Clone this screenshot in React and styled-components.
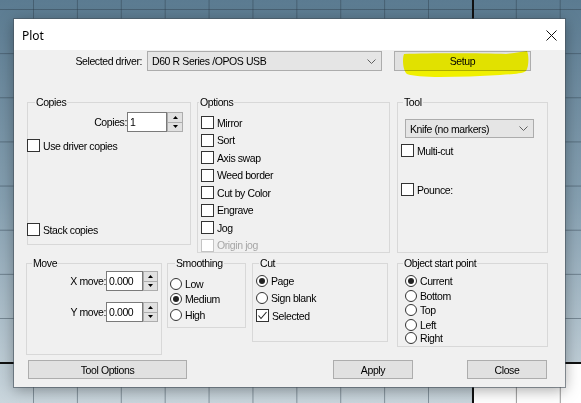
import React from 'react'
import styled, { createGlobalStyle } from 'styled-components'

const GlobalStyle = createGlobalStyle`
  html, body {
    margin: 0;
    padding: 0;
  }
  body {
    font-family: "Liberation Sans", Arial, sans-serif;
    font-size: 10.5px;
    letter-spacing: -0.4px;
    color: #000;
  }
`

const Desktop = styled.div`
  position: relative;
  width: 581px;
  height: 403px;
  overflow: hidden;
  background: linear-gradient(180deg, #5b7b91 0%, #86a0b1 50%, #cad6dd 100%);
`
const Grid = styled.div`
  position: absolute;
  inset: 0;
  background-image:
    linear-gradient(90deg, rgba(45, 62, 75, 0.45) 1px, transparent 1px),
    linear-gradient(180deg, rgba(45, 62, 75, 0.45) 1px, transparent 1px);
  background-size: 43.9px 44.15px;
  background-position: 33px 9px;
`
const Paper = styled.div`
  position: absolute;
  left: 472px;
  top: 362px;
  right: 0;
  bottom: 0;
  background-color: #fff;
  background-image: linear-gradient(90deg, #9a9a9a 1px, transparent 1px);
  background-size: 43.9px 100%;
`
const HLine = styled.div`
  position: absolute;
  left: 0;
  right: 0;
  top: 362px;
  height: 2px;
  background: #111;
`
const VLine = styled.div`
  position: absolute;
  top: 0;
  bottom: 0;
  left: 472px;
  width: 2px;
  background: #111;
`

const Window = styled.div`
  position: absolute;
  left: 14px;
  top: 19px;
  width: 551px;
  height: 368px;
  background: #f0f0f0;
  box-shadow: 0 0 0 1px rgba(70, 82, 92, 0.6), 0 3px 14px rgba(0, 0, 0, 0.35);
  display: flex;
  flex-direction: column;
`
const TitleBar = styled.div`
  height: 30px;
  flex: none;
  background: #fff;
  display: flex;
  align-items: center;
  justify-content: space-between;
  padding: 1px 8px 0;
  font-family: "Noto Sans", "Liberation Sans", sans-serif;
  font-size: 12px;
  letter-spacing: 0;
`
const Body = styled.div`
  position: relative;
  flex: 1;
`
const Row = styled.div`
  display: flex;
  align-items: flex-start;
  margin-top: ${p => p.$mt}px;
`
const Label = styled.div`
  width: ${p => p.$w}px;
  text-align: right;
  line-height: 20px;
  flex: none;
`
const Combo = styled.div`
  box-sizing: border-box;
  width: ${p => p.$w}px;
  height: ${p => p.$h}px;
  margin-left: ${p => p.$ml || 0}px;
  margin-top: ${p => p.$mt || 0}px;
  background: #e5e5e5;
  border: 1px solid #acacac;
  display: flex;
  align-items: center;
  justify-content: space-between;
  padding: 0 5px 0 4px;
  flex: none;
`
const Button = styled.div`
  box-sizing: border-box;
  width: ${p => p.$w}px;
  height: ${p => p.$h || 19}px;
  margin-left: ${p => p.$ml || 0}px;
  background: #e1e1e1;
  border: 1px solid #adadad;
  display: flex;
  align-items: center;
  justify-content: center;
  flex: none;
`
const Highlight = styled.svg`
  position: absolute;
  left: 386px;
  top: 0;
  mix-blend-mode: multiply;
  pointer-events: none;
`

const Group = styled.div`
  position: relative;
  box-sizing: border-box;
  margin-left: ${p => p.$ml}px;
  width: ${p => p.$w}px;
  height: ${p => p.$h}px;
  border: 1px solid #d8d8d8;
  display: flex;
  flex-direction: column;
  align-items: flex-start;
  flex: none;
`
const Legend = styled.span`
  position: absolute;
  top: -7px;
  left: ${p => (p.$x ?? 7) - 2}px;
  padding: 0 1px;
  background: #f0f0f0;
  line-height: 13px;
`
const Option = styled.div`
  display: flex;
  align-items: center;
  gap: 3px;
  height: ${p => p.$h || 13}px;
  margin-left: ${p => p.$ml || 0}px;
  margin-top: ${p => p.$mt || 0}px;
  color: ${p => (p.$disabled ? '#a6a6a6' : '#000')};
  white-space: nowrap;
`
const Box = styled.span`
  box-sizing: border-box;
  width: 13px;
  height: 13px;
  background: #fff;
  border: 1px solid ${p => (p.$disabled ? '#c4c4c4' : '#333')};
  display: flex;
  flex: none;
`
const Round = styled.span`
  box-sizing: border-box;
  width: 12px;
  height: 12px;
  border-radius: 50%;
  background: #fff;
  border: 1px solid #333;
  display: flex;
  align-items: center;
  justify-content: center;
  flex: none;
  &::after {
    content: '';
    display: ${p => (p.$on ? 'block' : 'none')};
    width: 6px;
    height: 6px;
    border-radius: 50%;
    background: #222;
  }
`
const Field = styled.div`
  display: flex;
  align-items: center;
  margin-top: ${p => p.$mt}px;
`
const Input = styled.div`
  box-sizing: border-box;
  width: ${p => p.$w}px;
  height: 20px;
  background: #fff;
  border: 1px solid #7a7a7a;
  padding-left: 2px;
  line-height: 18px;
  flex: none;
`
const Spin = styled.div`
  display: flex;
  flex-direction: column;
  width: ${p => p.$w}px;
  height: 20px;
  flex: none;
`
const SpinBtn = styled.div`
  box-sizing: border-box;
  flex: 1;
  background: #e1e1e1;
  border: 1px solid #adadad;
  margin-top: ${p => (p.$down ? -1 : 0)}px;
  display: flex;
  align-items: center;
  justify-content: center;
`

const Chevron = () => (
  <svg width="9" height="5" viewBox="0 0 9 5">
    <polyline points="0.5,0.5 4.5,4.5 8.5,0.5" fill="none" stroke="#606060" strokeWidth="1" />
  </svg>
)

const Arrow = ({ down }) => (
  <svg width="5" height="3" viewBox="0 0 5 3">
    <polygon points={down ? '0,0 5,0 2.5,3' : '0,3 5,3 2.5,0'} fill="#000" />
  </svg>
)

function CheckBox({ label, checked, disabled, ml, mt }) {
  return (
    <Option $ml={ml} $mt={mt} $disabled={disabled}>
      <Box $disabled={disabled}>
        {checked && (
          <svg width="11" height="11" viewBox="0 0 11 11">
            <polyline points="1.5,5.5 4,8.5 9.5,2" fill="none" stroke="#222" strokeWidth="1.1" />
          </svg>
        )}
      </Box>
      {label}
    </Option>
  )
}

function Radio({ label, checked, ml, mt }) {
  return (
    <Option $ml={ml} $mt={mt} $h={12}>
      <Round $on={checked} />
      {label}
    </Option>
  )
}

function SpinField({ label, labelW, value, inputW, spinW, mt }) {
  return (
    <Field $mt={mt}>
      <Label $w={labelW}>{label}</Label>
      <Input $w={inputW}>{value}</Input>
      <Spin $w={spinW}>
        <SpinBtn><Arrow /></SpinBtn>
        <SpinBtn $down><Arrow down /></SpinBtn>
      </Spin>
    </Field>
  )
}

const options = ['Mirror', 'Sort', 'Axis swap', 'Weed border', 'Cut by Color', 'Engrave', 'Jog']
const startPoints = [
  ['Current', 11, true],
  ['Bottom', 3],
  ['Top', 2],
  ['Left', 3],
  ['Right', 1],
]

export default function App() {
  return (
    <Desktop>
      <GlobalStyle />
      <Grid />
      <Paper />
      <HLine />
      <VLine />
      <Window>
        <TitleBar>
          <span>Plot</span>
          <svg width="11" height="11" viewBox="0 0 11 11">
            <path d="M0.5 0.5 L10.5 10.5 M10.5 0.5 L0.5 10.5" stroke="#111" strokeWidth="1" />
          </svg>
        </TitleBar>
        <Body>
          <Row $mt={1}>
            <Label $w={128}>Selected driver:</Label>
            <Combo $w={235} $h={20} $ml={5}>
              <span>D60 R Series /OPOS USB</span>
              <Chevron />
            </Combo>
            <Button $w={137} $h={20} $ml={12}>Setup</Button>
          </Row>

          <Row $mt={31}>
            <Group $ml={13} $w={164} $h={143}>
              <Legend $x={9}>Copies</Legend>
              <SpinField label="Copies:" labelW={99} value="1" inputW={40} spinW={16} mt={9} />
              <CheckBox label="Use driver copies" ml={-1} mt={7} />
              <CheckBox label="Stack copies" ml={-1} mt={71} />
            </Group>
            <Group $ml={6} $w={193} $h={151}>
              <Legend $x={3}>Options</Legend>
              {options.map((o, i) => (
                <CheckBox key={o} label={o} ml={3} mt={i === 0 ? 13 : 4.5} />
              ))}
              <CheckBox label="Origin jog" ml={3} mt={4.5} disabled />
            </Group>
            <Group $ml={7} $w={151} $h={151}>
              <Legend>Tool</Legend>
              <Combo $w={129} $h={19} $ml={7} $mt={16}>
                <span>Knife (no markers)</span>
                <Chevron />
              </Combo>
              <CheckBox label="Multi-cut" ml={3} mt={6} />
              <CheckBox label="Pounce:" ml={3} mt={26} />
            </Group>
          </Row>

          <Row $mt={10}>
            <Group $ml={12} $w={136} $h={92}>
              <Legend>Move</Legend>
              <SpinField label="X move:" labelW={79} value="0.000" inputW={37} spinW={15} mt={7} />
              <SpinField label="Y move:" labelW={79} value="0.000" inputW={37} spinW={15} mt={11} />
            </Group>
            <Group $ml={5} $w={79} $h={65}>
              <Legend $x={9}>Smoothing</Legend>
              <Radio label="Low" ml={2} mt={14} />
              <Radio label="Medium" ml={2} mt={3} checked />
              <Radio label="High" ml={2} mt={4} />
            </Group>
            <Group $ml={6} $w={136} $h={79}>
              <Legend $x={8}>Cut</Legend>
              <Radio label="Page" ml={3} mt={11} checked />
              <Radio label="Sign blank" ml={3} mt={5} />
              <CheckBox label="Selected" ml={3} mt={5} checked />
            </Group>
            <Group $ml={9} $w={151} $h={84}>
              <Legend>Object start point</Legend>
              {startPoints.map(([name, mt, on]) => (
                <Radio key={name} label={name} ml={7} mt={mt} checked={on} />
              ))}
            </Group>
          </Row>

          <Row $mt={5}>
            <Button $w={159} $ml={14}>Tool Options</Button>
            <Button $w={80} $ml={146}>Apply</Button>
            <Button $w={80} $ml={54}>Close</Button>
          </Row>

          <Highlight width="132" height="30" viewBox="0 0 132 30">
            <path
              d="M4,4 C30,3 80,3 106,4 L114,3 L127,1 C129,5 129,17 126,21 C122,24 112,24 100,25 C80,26 60,27 40,27 C25,27 12,26 7,24 C3,21 2,9 4,4 Z"
              fill="#ffff00"
            />
          </Highlight>
        </Body>
      </Window>
    </Desktop>
  )
}
